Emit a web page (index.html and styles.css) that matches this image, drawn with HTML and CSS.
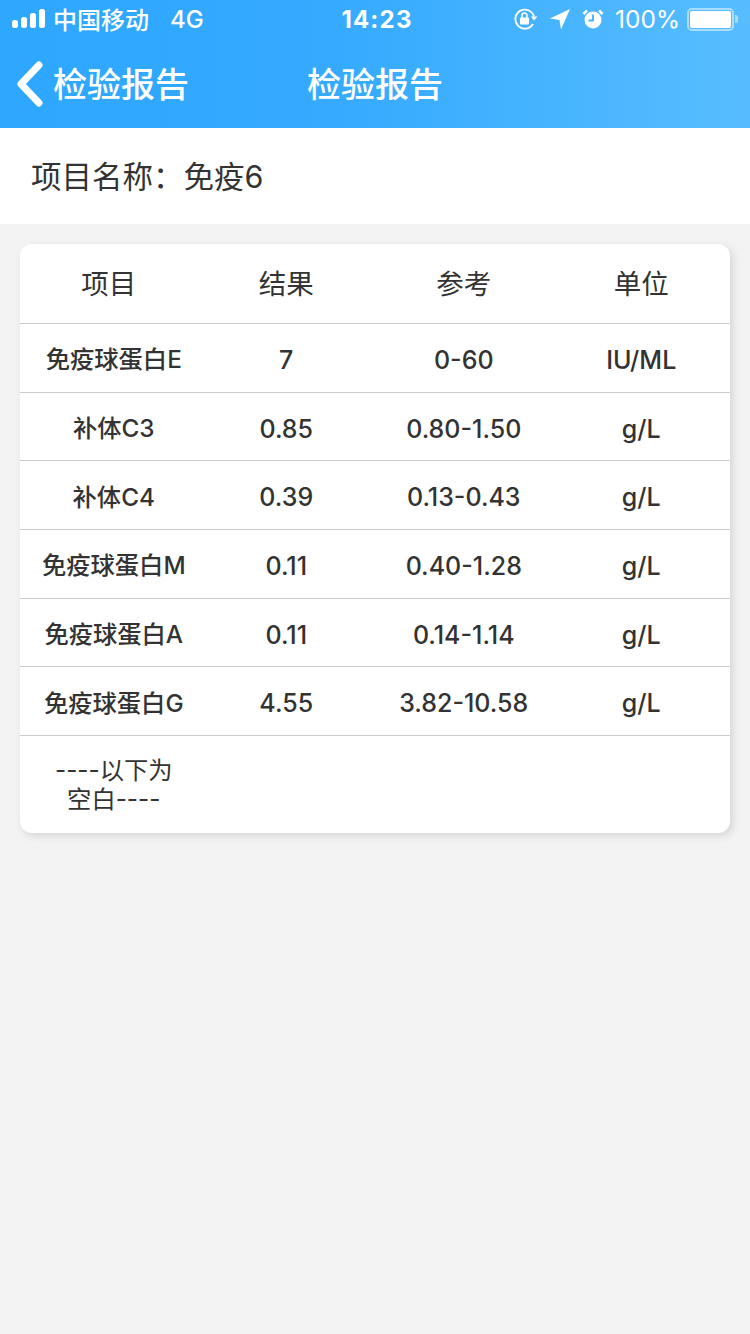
FILE: index.html
```html
<!DOCTYPE html>
<html lang="zh-CN">
<head>
  <meta charset="UTF-8" />
  <meta name="viewport" content="width=device-width, initial-scale=1.0">
  <title>检验报告</title>
  <link rel="stylesheet" href="styles.css">
</head>
<body>
  <header class="top-bar">
    <div class="status-bar">
      <div class="status-left">
        <svg class="signal" width="34" height="20" viewBox="0 0 34 20">
          <rect x="0" y="11" width="6" height="8" rx="2.5" fill="#fff"/>
          <rect x="9" y="8" width="6" height="11" rx="2.5" fill="#fff"/>
          <rect x="18" y="4" width="6" height="15" rx="2.5" fill="#fff"/>
          <rect x="27" y="0" width="6" height="19" rx="2.5" fill="#fff"/>
        </svg>
        <span class="carrier">中国移动</span>
        <span class="network">4G</span>
      </div>
      <div class="status-time">14:23</div>
      <div class="status-right">
        <svg width="24" height="22" viewBox="0 0 24 22">
          <path d="M20 8.500A9.500 9.500 0 1 0 19 16" fill="none" stroke="#fff" stroke-width="1.800"/>
          <path d="M16.800 8.500h6.600l-3.300 4z" fill="#fff"/>
          <rect x="6" y="9.500" width="9" height="7" rx="1" fill="#fff"/>
          <path d="M8 10V7.600a2.500 2.500 0 0 1 5 0V10" fill="none" stroke="#fff" stroke-width="1.500"/>
        </svg>
        <svg class="icon-loc" width="22" height="22" viewBox="0 0 22 22">
          <path d="M21 1 1 10.500l9.500 1.500L12 21.500z" fill="#fff"/>
        </svg>
        <svg class="icon-alarm" width="22" height="22" viewBox="0 0 22 22">
          <circle cx="11" cy="12" r="8.500" fill="#fff"/>
          <path d="M11 6.500V12.500H6.500" fill="none" stroke="#3fafff" stroke-width="1.800"/>
          <path d="M1.500 6 5 2.500M20.500 6 17 2.500" stroke="#fff" stroke-width="2.500" fill="none"/>
        </svg>
        <span class="battery-text">100%</span>
        <div class="battery">
          <div class="battery-fill"></div>
        </div>
        <div class="battery-tip"></div>
      </div>
    </div>
    <nav class="nav-bar">
      <a class="back" href="#">
        <svg width="30" height="46" viewBox="0 0 30 46">
          <path d="M25 4 7 23l18 19" fill="none" stroke="#fff" stroke-width="7" stroke-linecap="round" stroke-linejoin="round"/>
        </svg>
        <span>检验报告</span>
      </a>
      <h1 class="nav-title">检验报告</h1>
    </nav>
  </header>

  <section class="project-name">项目名称：免疫6</section>

  <main class="report-card">
    <div class="report-row report-head">
      <div class="cell">项目</div>
      <div class="cell">结果</div>
      <div class="cell">参考</div>
      <div class="cell">单位</div>
    </div>
    <div class="report-row">
      <div class="cell name">免疫球蛋白E</div>
      <div class="cell num">7</div>
      <div class="cell num">0-60</div>
      <div class="cell num">IU/ML</div>
    </div>
    <div class="report-row">
      <div class="cell name">补体C3</div>
      <div class="cell num">0.85</div>
      <div class="cell num">0.80-1.50</div>
      <div class="cell num">g/L</div>
    </div>
    <div class="report-row">
      <div class="cell name">补体C4</div>
      <div class="cell num">0.39</div>
      <div class="cell num">0.13-0.43</div>
      <div class="cell num">g/L</div>
    </div>
    <div class="report-row">
      <div class="cell name">免疫球蛋白M</div>
      <div class="cell num">0.11</div>
      <div class="cell num">0.40-1.28</div>
      <div class="cell num">g/L</div>
    </div>
    <div class="report-row">
      <div class="cell name">免疫球蛋白A</div>
      <div class="cell num">0.11</div>
      <div class="cell num">0.14-1.14</div>
      <div class="cell num">g/L</div>
    </div>
    <div class="report-row">
      <div class="cell name">免疫球蛋白G</div>
      <div class="cell num">4.55</div>
      <div class="cell num">3.82-10.58</div>
      <div class="cell num">g/L</div>
    </div>
    <div class="report-row report-end">
      <div class="cell name">----以下为<br>空白----</div>
    </div>
  </main>
</body>
</html>
```

FILE: styles.css
```css
* {
  box-sizing: border-box;
}
body {
  margin: 0;
  min-height: 1334px;
  background-color: #f3f3f3;
  color: #333;
  font-family: Inter, "Noto Sans CJK SC", sans-serif;
}

/* Top bar */
.top-bar {
  height: 128px;
  background: linear-gradient(90deg, #2ea7ff 0%, #35aaff 45%, #57bdff 100%);
  color: #fff;
}
.status-bar {
  height: 40px;
  padding: 0 12px 2px;
  display: grid;
  grid-template-columns: 1fr auto 1fr;
  align-items: center;
  font-size: 24px;
  font-weight: 500;
}
.status-left, .status-right {
  display: flex;
  align-items: center;
}
.status-left .carrier {
  margin-left: 7px;
  padding-bottom: 2px;
}
.status-left .network {
  margin-left: 21px;
}
.status-time {
  padding-left: 4px;
  font-weight: 700;
  letter-spacing: 1.200px;
}
.status-right {
  justify-content: flex-end;
}
.icon-loc {
  margin-left: 11px;
}
.icon-alarm {
  margin-left: 11px;
}
.battery-text {
  margin-left: 11px;
  font-size: 24.500px;
  font-weight: 400;
}
.battery {
  width: 47px;
  height: 23px;
  margin-left: 7px;
  padding: 1px;
  border: 2px solid rgba(255, 255, 255, 0.5);
  border-radius: 5px;
}
.battery-fill {
  height: 100%;
  background: #fff;
  border-radius: 2px;
}
.battery-tip {
  width: 3px;
  height: 8px;
  margin-left: 1px;
  background: rgba(255, 255, 255, 0.5);
  border-radius: 0 2px 2px 0;
}
.nav-bar {
  position: relative;
  height: 88px;
  display: flex;
  align-items: center;
  justify-content: center;
}
.back {
  position: absolute;
  left: 14px;
  top: 20px;
  display: flex;
  align-items: center;
  color: #fff;
  text-decoration: none;
  font-size: 34px;
  font-weight: 500;
  line-height: 46px;
}
.back span {
  margin-left: 9px;
  padding-top: 2px;
}
.nav-title {
  margin: 0;
  padding-top: 2px;
  font-size: 34px;
  font-weight: 500;
  line-height: 46px;
}

/* Project name */
.project-name {
  height: 96px;
  padding: 0 0 2px 31px;
  display: flex;
  align-items: center;
  background: #fff;
  font-size: 30.500px;
  font-weight: 400;
}

/* Report table */
.report-card {
  margin: 20px 20px 0;
  background: #fff;
  border-radius: 12px;
  box-shadow: 3px 3px 8px rgba(0, 0, 0, 0.12);
}
.report-row {
  display: grid;
  grid-template-columns: repeat(4, 1fr);
  align-items: center;
  height: 68.700px;
  border-bottom: 1px solid #ccc;
  font-size: 24.300px;
  font-weight: 500;
  text-align: center;
}
.report-head {
  height: 80px;
  padding-bottom: 3px;
  font-size: 27.500px;
  font-weight: 400;
}
.cell.name {
  padding-left: 10px;
}
.cell.num {
  padding-top: 4px;
  font-size: 25px;
}
.report-end {
  height: 97px;
  border-bottom: none;
  font-weight: 400;
  line-height: 29px;
}
```
